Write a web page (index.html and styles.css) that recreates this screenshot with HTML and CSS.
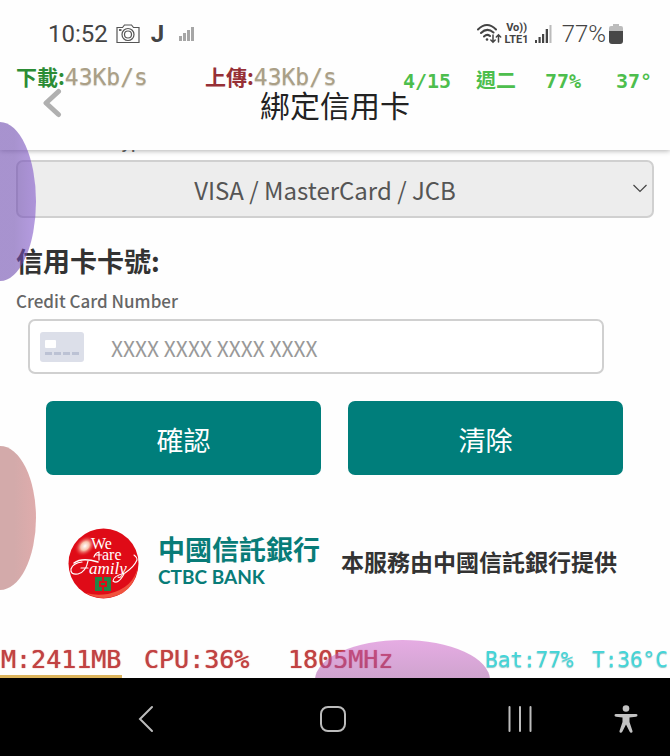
FILE: index.html
```html
<!DOCTYPE html>
<html lang="zh-Hant">
<head>
<meta charset="utf-8">
<meta name="viewport" content="width=device-width, initial-scale=1">
<title>綁定信用卡</title>
<link rel="stylesheet" href="styles.css">
</head>
<body>
<div class="screen">
  <header class="top">
    <div class="status">
      <div class="status-group">
        <span class="clock">10:52</span>
        <svg class="camera" width="24" height="20" viewBox="0 0 24 20" fill="none" stroke="#555" stroke-width="1.2">
          <path d="M1 3.500H6.500L8.500 1H15.500L17.500 3.500H23V18.500H1Z"/>
          <circle cx="12" cy="10.500" r="6"/><circle cx="12" cy="10.500" r="3.500"/><path d="M3 6H5.500" stroke-width="1.800"/>
        </svg>
        <span class="app-mark">J</span>
        <svg width="15" height="14" viewBox="0 0 15 14" fill="#a6a6a6"><path d="M0 9h3v5H0zM4 6h3v8H4zM8 3h3v11H8zM12 0h3v14h-3z"/></svg>
      </div>
      <div class="status-group status-right">
        <svg width="26" height="22" viewBox="0 0 26 22" fill="none" stroke="#444" stroke-width="2" stroke-linecap="round">
          <path d="M2 6.500Q11 -2.500 20 6.500M5 10Q11 4 17.500 9.500M8 13.500Q11 10.500 14 13"/>
          <circle cx="11" cy="16.500" r="1.300" fill="#444" stroke="none"/>
          <path d="M17 12v7M14.800 17l2.200 2.200 2.200-2.200M22.500 19v-7M20.300 14l2.200-2.200 2.200 2.200" stroke-width="1.500"/>
        </svg>
        <span class="volte"><span>Vo))</span><span>LTE1</span></span>
        <svg class="signal" width="17" height="18" viewBox="0 0 17 18" fill="#444"><path d="M0 15h2v3H0zM3.500 12h2.200v6H3.500zM7 9h2.200v9H7zM10.700 4h2.300v14h-2.300z"/><path fill="#bbb" d="M14.500 0h2v18h-2z"/></svg>
        <span class="charge">77%</span>
        <svg width="14" height="20" viewBox="0 0 14 20"><path d="M4 0h6v2h2q2 0 2 2v4H0V4q0-2 2-2h2z" fill="#bcbcbc"/><path d="M0 7h14v10q0 3-3 3H3q-3 0-3-3z" fill="#484848"/></svg>
      </div>
    </div>
    <div class="titlebar">
      <button class="back" type="button" aria-label="返回">
        <svg width="20" height="30" viewBox="0 0 20 30" fill="none" stroke="#b0b0b0" stroke-width="5" stroke-linecap="round" stroke-linejoin="round"><path d="M16.500 3.500L4 15L16.500 26.500"/></svg>
      </button>
      <h1>綁定信用卡</h1>
    </div>
    <div class="monitor monitor-top">
      <span class="rate"><b class="down">下載:</b>43Kb/s</span>
      <span class="rate"><b class="up">上傳:</b>43Kb/s</span>
      <span class="day">4/15</span>
      <span class="day">週二</span>
      <span class="day">77%</span>
      <span class="day">37°</span>
    </div>
  </header>

  <main>
    <form>
      <label class="sub" for="type">Credit Card Type</label>
      <div class="select-box">
        <select id="type"><option>VISA / MasterCard / JCB</option></select>
        <svg class="chevron" width="14" height="9" viewBox="0 0 14 9" fill="none" stroke="#444" stroke-width="1.200"><path d="M.5 1L7 7.500L13.500 1"/></svg>
      </div>
      <label class="field-title" for="number">信用卡卡號:</label>
      <label class="sub" for="number">Credit Card Number</label>
      <div class="number-box">
        <svg width="44" height="30" viewBox="0 0 44 30"><rect width="44" height="30" rx="3" fill="#dcdfe9"/><rect x="5" y="8" width="11" height="8" rx="1" fill="#fff"/><path d="M5 21.500h7M14 21.500h7M23 21.500h7M32 21.500h7" stroke="#bcc2d4" stroke-width="3"/></svg>
        <input id="number" type="text" inputmode="numeric" placeholder="XXXX XXXX XXXX XXXX">
      </div>
      <div class="actions">
        <button type="button">確認</button>
        <button type="reset">清除</button>
      </div>
    </form>
    <section class="provider">
      <svg class="badge" width="71" height="71" viewBox="0 0 71 71">
        <defs>
          <radialGradient id="shine"><stop offset="0" stop-color="#fff"/><stop offset=".4" stop-color="#f8c3ac"/><stop offset="1" stop-color="#e4101b" stop-opacity="0"/></radialGradient>
        </defs>
        <circle cx="35.500" cy="35.500" r="35" fill="#df0b17"/>
        <path d="M70 38Q66 60 40 66Q28 68 18 65Q26 70 37 70Q66 68 70 38Z" fill="#f0533f"/>
        <ellipse cx="17" cy="18" rx="12" ry="9" fill="url(#shine)" transform="rotate(-45 17 18)"/>
        <text class="badge-text" fill="#fff"><tspan x="23" y="21" font-size="16">We</tspan><tspan x="34" y="32" font-size="16">are</tspan><tspan x="21" y="46" font-size="17" font-style="italic">amily</tspan></text>
        <g fill="none" stroke="#fff" stroke-linecap="round">
          <path d="M6 35Q14 29 30 34" stroke-width="1.500"/>
          <path d="M20 33Q18 44 10 46Q2 47 3 41Q5 35 14 34M13 40H20" stroke-width="1.200"/>
          <path d="M31 32V24Q27 25 26 29M28 27H34" stroke-width="1.200"/>
          <path d="M56 46Q50 57 45 53Q45 48 57 45Q66 39 69 32Q69 29 66 27" stroke-width="1.100"/>
        </g>
        <path d="M27 49h7v4h-3v6h3v4h-7zM43 49h-7v4h3v6h-3v4h7zM33 55h4v2h-4z" fill="#248345"/>
      </svg>
      <div class="bank"><strong>中國信託銀行</strong><span>CTBC BANK</span></div>
      <p>本服務由中國信託銀行提供</p>
    </section>
  </main>

  <div class="monitor monitor-bottom">
    <span class="load">M:2411MB</span>
    <span class="load">CPU:36%</span>
    <span class="load">1805MHz</span>
    <span class="battery">Bat:77%</span>
    <span class="battery">T:36°C</span>
    <i class="edge-bar"></i>
    <i class="blob blob-bottom"></i>
  </div>

  <nav>
    <button type="button" aria-label="返回"><svg width="16" height="28" viewBox="0 0 16 28"><path d="M14 2L2 14L14 26"/></svg></button>
    <button type="button" aria-label="主畫面"><svg width="26" height="26" viewBox="0 0 26 26"><rect x="1" y="1" width="24" height="24" rx="7"/></svg></button>
    <button type="button" aria-label="最近"><svg width="24" height="26" viewBox="0 0 24 26"><path d="M1.500 1v24M12 1v24M22.500 1v24"/></svg></button>
    <button type="button" aria-label="協助工具"><svg width="24" height="28" viewBox="0 0 24 28"><g fill="#c2c2c2" stroke="none"><circle cx="12" cy="3.500" r="3.300"/><path d="M2 9h20q1.500 0 1.500 1.300T22 11.700L15.500 12.500V17L18.500 26q.3 1.500-1 1.800t-1.800-1L12 19.500 8.300 26.800q-.7 1.300-1.900 1T5.500 26L8.500 17V12.500L2 11.700Q.5 11.500.5 10.300T2 9z"/></g></svg></button>
  </nav>

  <i class="blob blob-upper"></i>
  <i class="blob blob-lower"></i>
</div>
</body>
</html>
```
FILE: styles.css
```css
* { box-sizing: border-box; }
body {
  margin: 0;
  background: #fefefe;
  color: #333;
  font-family: "Noto Sans CJK TC", "Noto Sans", sans-serif;
}
button, input, select { font: inherit; }
svg { display: block; flex: none; }
.screen {
  position: relative;
  display: flex;
  flex-direction: column;
  min-height: 100vh;
  overflow: hidden;
}
.top {
  position: relative;
  z-index: 1;
  background: #fefefe;
  box-shadow: 0 1px 5px rgba(0, 0, 0, .3);
}
.status {
  display: flex;
  justify-content: space-between;
  height: 68px;
  padding: 0 47px 0 48px;
  color: #444;
  font: 24px/28px Roboto, sans-serif;
}
.status-group { display: flex; align-items: center; }
.camera { margin: 0 11px 0 8px; }
.app-mark { margin-right: 15px; font-weight: 700; }
.volte {
  display: flex;
  flex-direction: column;
  align-items: center;
  margin: 0 6px 0 3px;
  font: 700 11px/12px Roboto, sans-serif;
}
.signal { margin-right: 10px; }
.charge { margin-right: 3px; font-weight: 300; }
.titlebar {
  display: grid;
  grid-template-columns: 1fr auto 1fr;
  height: 82px;
  padding: 20px 0 0 42px;
  align-items: start;
}
.titlebar::after { content: ""; margin-right: 42px; }
.back { justify-self: start; padding: 0; border: 0; background: none; }
h1 {
  margin: 0 42px 0 0;
  color: #222;
  font-size: 30px;
  font-weight: 400;
  line-height: 32px;
}
.monitor {
  display: grid;
  font-family: "DejaVu Sans Mono", "Noto Sans CJK TC", monospace;
  white-space: nowrap;
}
.monitor-top {
  position: absolute;
  inset: 62px 0 auto;
  grid-template-columns: 189fr 198fr 73fr 69fr 71fr 54fr;
  padding-left: 16px;
  line-height: 28px;
}
.monitor-top span { min-width: 0; }
.rate { color: #aa9f86; font-size: 23px; text-shadow: 0 1px 1px rgba(139, 128, 106, .4); }
.rate b { font: 700 21px/28px "Noto Sans CJK TC", sans-serif; text-shadow: none; }
.down { color: #2c8c35; }
.up { color: #963036; }
.day { padding-top: 5px; color: #4dbe4d; font-size: 20px; font-weight: 700; }

main { flex: 1; }
form { margin-top: -21px; padding: 0 16px; }
label { display: block; }
.sub { color: #666; font-size: 17px; font-weight: 500; line-height: 24px; }
.select-box { position: relative; margin-top: 7px; }
select {
  display: block;
  width: 100%;
  height: 58px;
  padding: 0 20px 0 0;
  border: 2px solid #d0d0d0;
  border-radius: 7px;
  background: #ededed;
  color: #555;
  font-size: 24px;
  text-align: center;
  text-align-last: center;
  appearance: none;
}
.chevron { position: absolute; top: 24px; right: 7px; }
.field-title { margin-top: 23px; font-size: 27px; font-weight: 700; line-height: 40px; }
.field-title + .sub { margin-top: 8px; }
.number-box {
  display: flex;
  align-items: center;
  gap: 27px;
  height: 55px;
  margin: 6px 50px 0 12px;
  padding: 0 10px;
  border: 2px solid #d0d0d0;
  border-radius: 7px;
  background: #fff;
}
input {
  flex: 1;
  min-width: 0;
  padding: 2px 0 0;
  border: 0;
  outline: 0;
  background: none;
  color: #555;
  font-size: 21px;
}
input::placeholder { color: #999; opacity: 1; }
.actions {
  display: grid;
  grid-template-columns: 1fr 1fr;
  gap: 27px;
  margin: 27px 31px 0 30px;
}
.actions button {
  height: 74px;
  padding: 2px 0 0;
  border: 0;
  border-radius: 7px;
  background: #007e7b;
  color: #fff;
  font-size: 27px;
}
.provider {
  display: flex;
  align-items: center;
  margin-top: 53px;
  padding-left: 68px;
}
.badge-text { font-family: "Liberation Serif", serif; }
.bank {
  display: flex;
  flex-direction: column;
  margin: 0 21px 6px 19px;
  color: #087c78;
}
.bank strong { font-size: 27px; line-height: 32px; }
.bank span { font: 700 19px/24px Lato, sans-serif; }
.provider p { margin: 0 0 6px; font-size: 23px; font-weight: 700; line-height: 32px; white-space: nowrap; }

.monitor-bottom {
  position: relative;
  grid-template-columns: 143fr 144fr 197fr 107fr 78fr;
  height: 38px;
  padding-left: 1px;
  overflow: hidden;
  line-height: 40px;
}
.load { color: #c24242; font-size: 25px; text-shadow: 0 0 1px #c24242; }
.battery { color: #43d5d8; font-size: 21px; text-shadow: 0 1px 1px rgba(56, 157, 162, .6); }
.edge-bar { position: absolute; left: 0; bottom: 0; width: 122px; height: 3px; background: #dcb45c; }
nav {
  display: grid;
  grid-template-columns: 1fr 1fr 1fr auto;
  align-items: center;
  height: 78px;
  padding: 4px 32px 0 52px;
  background: #000;
}
nav button { display: grid; place-items: center; padding: 0; border: 0; background: none; }
nav svg { fill: none; stroke: #bcbcbc; stroke-width: 2; stroke-linecap: round; }
.blob { position: absolute; z-index: 2; pointer-events: none; }
.blob-upper {
  top: 122px; left: -36px; width: 72px; height: 159px; border-radius: 50%;
  background: linear-gradient(90deg, rgba(110, 75, 175, .6) 70%, rgba(119, 72, 200, .54));
}
.blob-lower {
  top: 446px; left: -36px; width: 72px; height: 144px; border-radius: 50%;
  background: linear-gradient(90deg, #d3aaaa 70%, #dfacac);
}
.blob-bottom {
  top: 0; left: 47%; width: 175px; height: 80px; border-radius: 50%;
  background: linear-gradient(rgba(205, 90, 200, .5), rgba(150, 70, 150, .5) 60%);
}
```
